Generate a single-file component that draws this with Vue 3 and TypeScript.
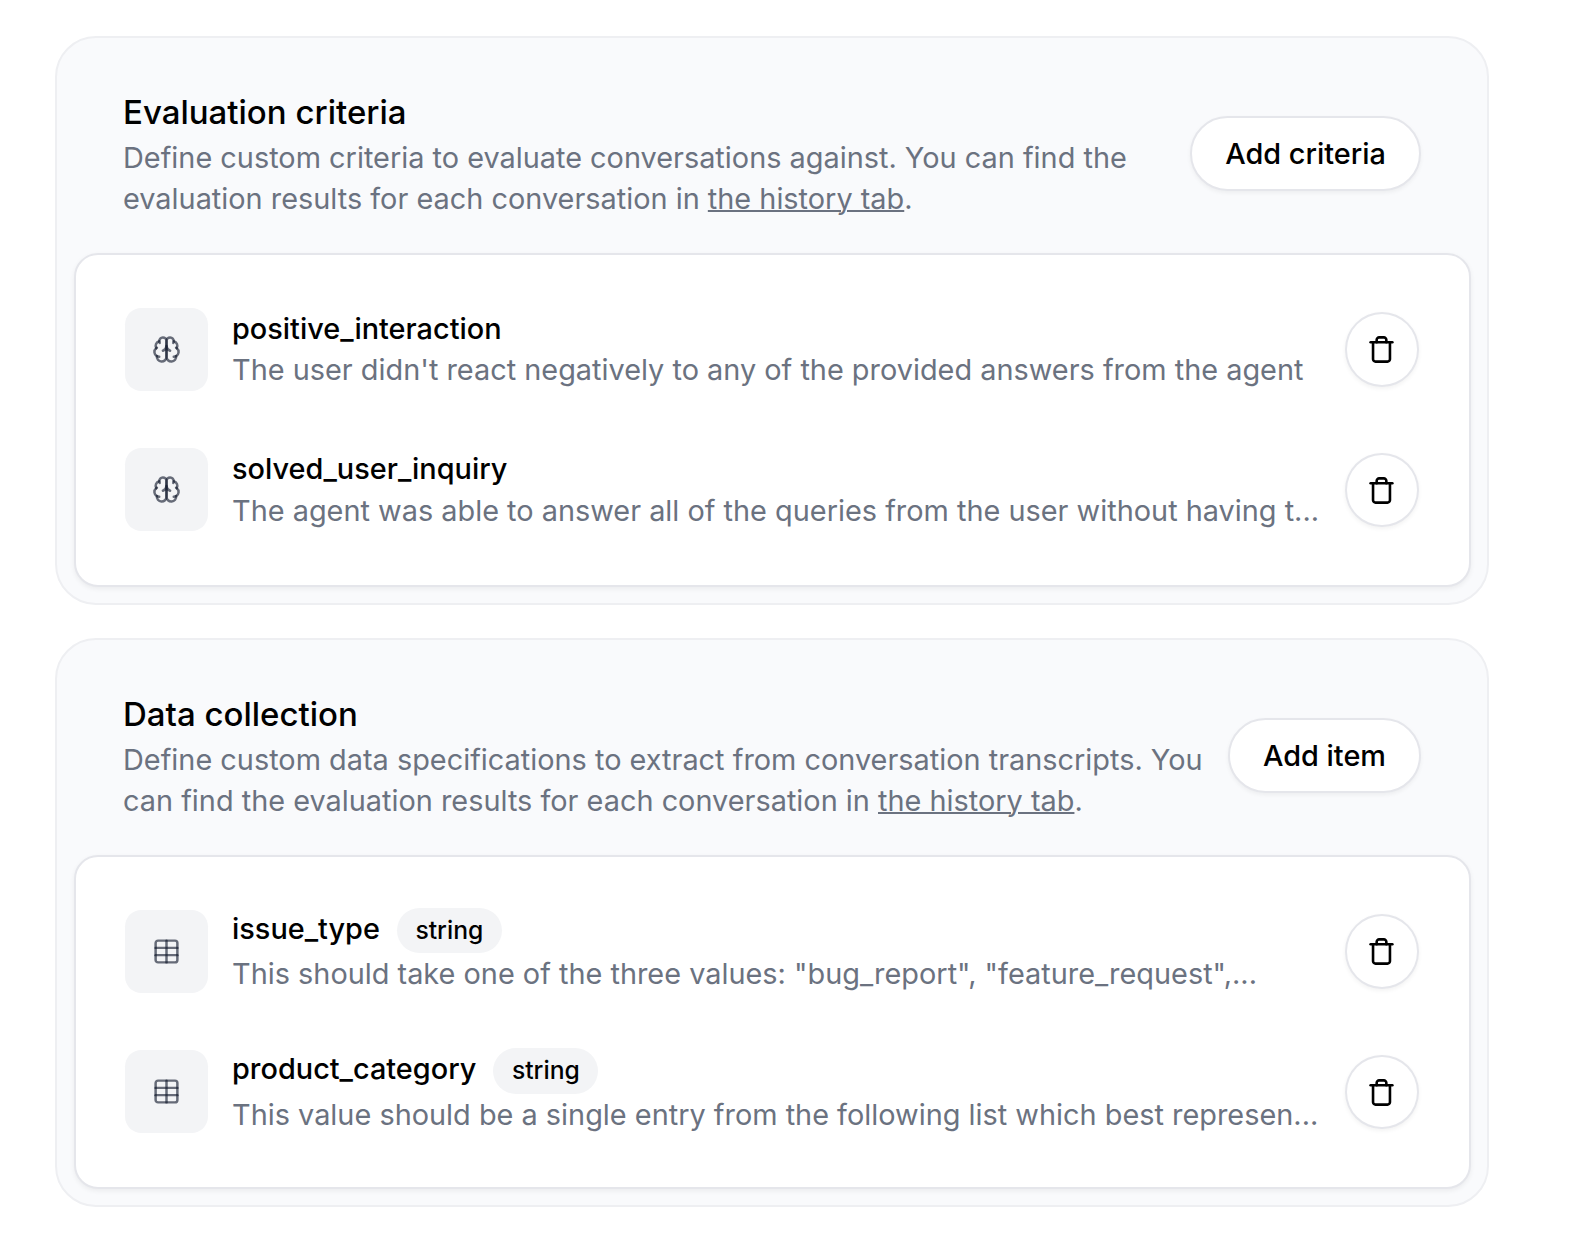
<script setup lang="ts">
interface Item {
  name: string
  description: string
  type?: string
}

interface Section {
  id: string
  title: string
  intro: string
  action: string
  icon: 'brain' | 'table'
  items: Item[]
}

const sections: Section[] = [
  {
    id: 'criteria',
    title: 'Evaluation criteria',
    intro:
      'Define custom criteria to evaluate conversations against. You can find the evaluation results for each conversation in ',
    action: 'Add criteria',
    icon: 'brain',
    items: [
      {
        name: 'positive_interaction',
        description: "The user didn't react negatively to any of the provided answers from the agent",
      },
      {
        name: 'solved_user_inquiry',
        description: 'The agent was able to answer all of the queries from the user without having t...',
      },
    ],
  },
  {
    id: 'data',
    title: 'Data collection',
    intro:
      'Define custom data specifications to extract from conversation transcripts. You can find the evaluation results for each conversation in ',
    action: 'Add item',
    icon: 'table',
    items: [
      {
        name: 'issue_type',
        type: 'string',
        description: 'This should take one of the three values: "bug_report", "feature_request",...',
      },
      {
        name: 'product_category',
        type: 'string',
        description: 'This value should be a single entry from the following list which best represen...',
      },
    ],
  },
]
</script>

<template>
  <main class="page">
    <section v-for="section in sections" :key="section.id" class="card">
      <header class="head">
        <div class="head-text">
          <h2 class="title">{{ section.title }}</h2>
          <p class="intro">{{ section.intro }}<a class="link">the history tab</a>.</p>
        </div>
        <button class="add" type="button">{{ section.action }}</button>
      </header>

      <ul class="panel">
        <li v-for="item in section.items" :key="item.name" class="row">
          <span class="tile">
            <svg v-if="section.icon === 'brain'" class="icon muted" viewBox="0 0 24 24">
              <path d="M12 5a3 3 0 1 0-5.997.125 4 4 0 0 0-2.526 5.77 4 4 0 0 0 .556 6.588A4 4 0 1 0 12 18Z" />
              <path d="M12 5a3 3 0 1 1 5.997.125 4 4 0 0 1 2.526 5.77 4 4 0 0 1-.556 6.588A4 4 0 1 1 12 18Z" />
              <path d="M15 13a4.5 4.5 0 0 1-3-4 4.5 4.5 0 0 1-3 4" />
              <path d="M17.599 6.5a3 3 0 0 0 .399-1.375" />
              <path d="M6.003 5.125A3 3 0 0 0 6.401 6.5" />
              <path d="M3.477 10.896a4 4 0 0 1 .585-.396" />
              <path d="M19.938 10.5a4 4 0 0 1 .585.396" />
              <path d="M6 18a4 4 0 0 1-1.967-.516" />
              <path d="M19.967 17.484A4 4 0 0 1 18 18" />
            </svg>
            <svg v-else class="icon muted" viewBox="0 0 24 24">
              <path d="M12 3v18" />
              <rect width="18" height="18" x="3" y="3" rx="2" />
              <path d="M3 9h18" />
              <path d="M3 15h18" />
            </svg>
          </span>
          <div class="body">
            <div class="name-line">
              <span class="name">{{ item.name }}</span>
              <span v-if="item.type" class="badge">{{ item.type }}</span>
            </div>
            <p class="description">{{ item.description }}</p>
          </div>
          <button class="remove" type="button" aria-label="Delete">
            <svg class="icon" viewBox="0 0 24 24">
              <path d="M3 6h18" />
              <path d="M19 6v14c0 1-1 2-2 2H7c-1 0-2-1-2-2V6" />
              <path d="M8 6V4c0-1 1-2 2-2h4c1 0 2 1 2 2v2" />
            </svg>
          </button>
        </li>
      </ul>
    </section>
  </main>
</template>

<style>
body {
  margin: 0;
  background: #fff;
}
</style>

<style scoped>
.page {
  box-sizing: border-box;
  width: 1596px;
  height: 1236px;
  padding: 36px 107px 0 55px;
  display: flex;
  flex-direction: column;
  gap: 33px;
  overflow: hidden;
  font-family: Inter, 'Liberation Sans', sans-serif;
  color: #000;
}

.card {
  box-sizing: border-box;
  height: 569px;
  padding: 0 16px 16px 17px;
  border: 2px solid #eeeff2;
  border-radius: 41px;
  background: #f9fafc;
  display: flex;
  flex-direction: column;
}

.head {
  height: 215px;
  box-sizing: border-box;
  padding: 16px 50px 0 49px;
  display: flex;
  align-items: center;
  justify-content: space-between;
  gap: 22px;
}

.head-text {
  margin-bottom: 2px;
}

.title {
  margin: 0;
  font-size: 33px;
  line-height: 50px;
  font-weight: 500;
}

.intro {
  margin: 0;
  font-size: 28.88px;
  line-height: 41px;
  color: #6b7280;
}

.link {
  text-decoration: underline;
  text-decoration-thickness: 2px;
}

.add {
  flex: none;
  box-sizing: border-box;
  height: 75px;
  padding: 0 33px;
  border: 2px solid #e5e6eb;
  border-radius: 38px;
  background: #fff;
  box-shadow: 0 2px 4px rgba(0, 0, 0, 0.05);
  font: inherit;
  font-size: 28.88px;
  font-weight: 500;
  color: #000;
}

.panel {
  flex: 1;
  box-sizing: border-box;
  margin: 0;
  padding: 39px 50px 0 49px;
  list-style: none;
  border: 2px solid #e5e6eb;
  border-radius: 24px;
  background: #fff;
  box-shadow: 0 2px 5px rgba(0, 0, 0, 0.06);
}

.row {
  height: 110px;
  display: flex;
  align-items: center;
}

.row + .row {
  margin-top: 30.75px;
}

.tile {
  flex: none;
  width: 83px;
  height: 83px;
  border-radius: 16.5px;
  background: #f3f4f6;
  display: flex;
  align-items: center;
  justify-content: center;
}

.icon {
  display: block;
  width: 29px;
  height: 29px;
  fill: none;
  stroke: #000;
  stroke-width: 2.15;
  stroke-linecap: round;
  stroke-linejoin: round;
}

.muted {
  stroke: rgba(15, 23, 42, 0.62);
  stroke-width: 2.05;
}

.body {
  flex: 1;
  min-width: 0;
  margin-left: 24px;
}

.name-line {
  display: flex;
  align-items: flex-start;
  gap: 17px;
}

.name {
  font-size: 28.88px;
  line-height: 41.3px;
  font-weight: 500;
}

.badge {
  height: 45.4px;
  padding: 0 18.5px;
  border-radius: 23px;
  background: #f3f4f6;
  font-size: 24.7px;
  line-height: 45.8px;
  font-weight: 500;
}

.description {
  margin: 0;
  font-size: 28.88px;
  line-height: 41.3px;
  color: #6b7280;
  white-space: nowrap;
}

.remove {
  flex: none;
  box-sizing: border-box;
  width: 74px;
  height: 74.6px;
  margin-top: 0.5px;
  padding: 0 1px 0 0;
  border: 2px solid #e5e6eb;
  border-radius: 50%;
  background: #fff;
  box-shadow: 0 2px 4px rgba(0, 0, 0, 0.05);
  display: flex;
  align-items: center;
  justify-content: center;
}
</style>
